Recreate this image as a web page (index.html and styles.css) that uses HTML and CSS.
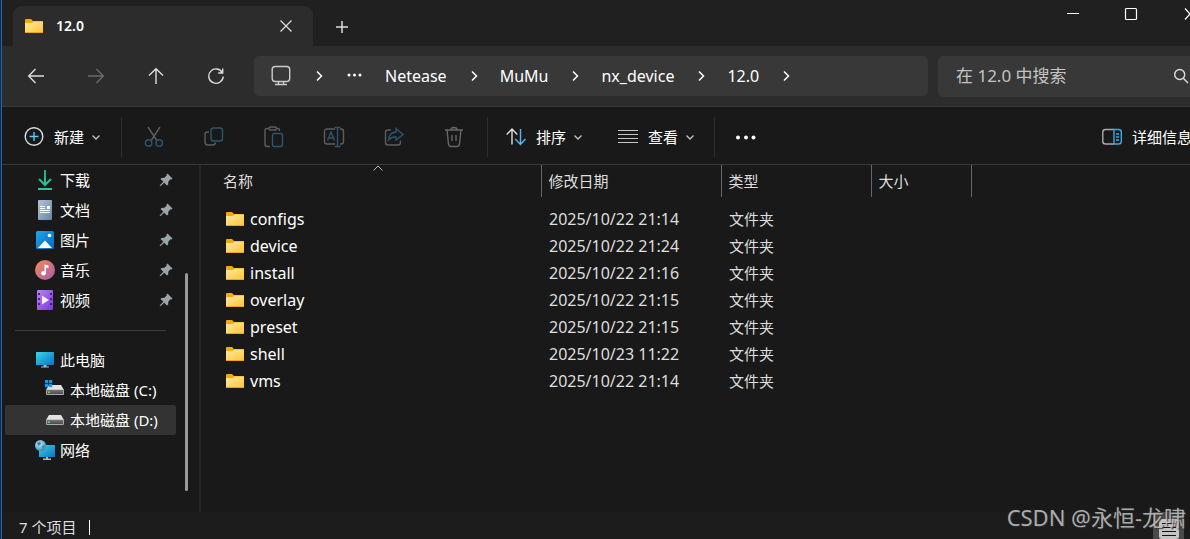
FILE: index.html
```html
<!DOCTYPE html>
<html lang="zh-CN">
<head>
<meta charset="utf-8">
<title>12.0</title>
<link rel="stylesheet" href="styles.css">
</head>
<body>
<svg class="defs" aria-hidden="true">
  <defs>
    <linearGradient id="gold" x1="0" y1="0" x2="1" y2="1"><stop offset="0" stop-color="#ffe9a6"/><stop offset="1" stop-color="#ffc637"/></linearGradient>
    <linearGradient id="doc" x1="0" y1="0" x2="1" y2="1"><stop offset="0" stop-color="#b4c3d6"/><stop offset="1" stop-color="#6585a8"/></linearGradient>
    <linearGradient id="sky" x1="0" y1="0" x2="1" y2="1"><stop offset="0" stop-color="#1fa5ec"/><stop offset="1" stop-color="#0868bd"/></linearGradient>
    <linearGradient id="tune" x1="0" y1="0" x2="1" y2="1"><stop offset="0" stop-color="#f78c4e"/><stop offset="1" stop-color="#a45bb4"/></linearGradient>
    <linearGradient id="film" x1="0" y1="0" x2="1" y2="1"><stop offset="0" stop-color="#b983f5"/><stop offset="1" stop-color="#7838d8"/></linearGradient>
    <linearGradient id="screen" x1="0" y1="0" x2="1" y2="1"><stop offset="0" stop-color="#38d6e6"/><stop offset="1" stop-color="#0b72c4"/></linearGradient>
    <linearGradient id="green" x1="0" y1="0" x2="0" y2="1"><stop offset="0" stop-color="#18b374"/><stop offset="1" stop-color="#27c69d"/></linearGradient>
    <linearGradient id="metal" x1="0" y1="0" x2="0" y2="1"><stop offset="0" stop-color="#777"/><stop offset="1" stop-color="#4a4a4a"/></linearGradient>
    <radialGradient id="globe" cx=".4" cy=".35" r=".7"><stop offset="0" stop-color="#cfe9f5"/><stop offset=".6" stop-color="#6db0d2"/><stop offset="1" stop-color="#3c83b0"/></radialGradient>
  </defs>
  <symbol id="i-folder" viewBox="0 0 20 16"><path d="M1 2Q1 1 2 1H7L9 3H18.500Q19 3 19 4V8H1Z" fill="#f5a90e"/><path d="M1 5H8L9.500 3.500H19V14H1Z" fill="url(#gold)"/><path d="M1 14H19V15H1Z" fill="#eda616"/></symbol>
  <symbol id="i-chev" viewBox="0 0 16 16"><path d="M6 3.500L10.500 8L6 12.500" fill="none" stroke="currentColor" stroke-width="1.500"/></symbol>
  <symbol id="i-down" viewBox="0 0 12 12"><path d="M2.500 4.500L6 8L9.500 4.500" fill="none" stroke="#c4c4c4" stroke-width="1.300"/></symbol>
  <symbol id="i-pin" viewBox="0 0 14 14"><path d="M8.500 .5L13.500 5.500L12.500 6.500L11.500 6.300L9.300 8.700L9.200 11.500L8 12.500L5.200 9.700L1.300 13.300L.6 12.600L4.300 8.800L1.500 6L2.600 4.900L5.400 4.800L7.700 2.600L7.500 1.500Z" fill="#9aa4ab"/></symbol>
  <symbol id="i-drive" viewBox="0 0 20 16"><path d="M4 4H16L19 9H1Z" fill="#e3e3e3"/><rect x="1" y="8.500" width="18" height="5.500" rx="1" fill="#aaa"/><rect x="2" y="9" width="16" height="4" fill="url(#metal)"/><rect x="3" y="10.500" width="2" height="1.500" fill="#4be36a"/></symbol>
</svg>

<div class="window">
  <header class="tabs">
    <div class="tab">
      <svg class="folder"><use href="#i-folder"/></svg>
      <span class="tab-title">12.0</span>
      <button class="plain" aria-label="关闭标签页"><svg width="14" height="14" viewBox="0 0 14 14"><path d="M1.500 1.500L12.500 12.500M12.500 1.500L1.500 12.500" stroke="#ddd" stroke-width="1.200"/></svg></button>
    </div>
    <button class="plain new-tab" aria-label="新标签页"><svg width="14" height="14" viewBox="0 0 14 14"><path d="M7 1V13M1 7H13" stroke="#ddd" stroke-width="1.500"/></svg></button>
    <div class="caption">
      <button class="plain" aria-label="最小化"><svg width="14" height="14" viewBox="0 0 14 14"><path d="M1 6.500H13" stroke="#fff"/></svg></button>
      <button class="plain" aria-label="最大化"><svg width="14" height="14" viewBox="0 0 14 14"><rect x="1.500" y="1.500" width="11" height="11" rx="1" fill="none" stroke="#fff" stroke-width="1.200"/></svg></button>
      <button class="plain" aria-label="关闭"><svg width="14" height="14" viewBox="0 0 14 14"><path d="M3 1.500L8 7L3 12.500M13 1.500L8 7L13 12.500" fill="none" stroke="#fff" stroke-width="1.200"/></svg></button>
    </div>
  </header>

  <div class="navbar">
    <button class="plain nav-btn" aria-label="后退"><svg width="18" height="18" viewBox="0 0 18 18"><path d="M17 9H2M8.500 2L1.700 9L8.500 16"/></svg></button>
    <button class="plain nav-btn dim" aria-label="前进"><svg width="18" height="18" viewBox="0 0 18 18"><path d="M1 9H16M9.500 2L16.300 9L9.500 16"/></svg></button>
    <button class="plain nav-btn" aria-label="向上"><svg width="18" height="18" viewBox="0 0 18 18"><path d="M9 17V2M2 8.500L9 1.700L16 8.500"/></svg></button>
    <button class="plain nav-btn" aria-label="刷新"><svg width="18" height="18" viewBox="0 0 18 18"><path d="M15.500 6A7.200 7.200 0 1 0 16.200 9.500M15.700 1.500V6H11.200"/></svg></button>
    <nav class="address" aria-label="地址">
      <button class="plain" aria-label="此电脑"><svg width="24" height="24" viewBox="0 0 24 24" fill="none" stroke="#ccc" stroke-width="1.400"><rect x="3.200" y="2.500" width="17.500" height="15" rx="3"/><path d="M9.500 17.500V20M14.500 17.500V20M6 20.500H18"/></svg></button>
      <svg class="chev"><use href="#i-chev"/></svg>
      <button class="plain" aria-label="更多"><svg width="22" height="16" viewBox="0 0 22 16" fill="#fff"><circle cx="4" cy="7" r="1.500"/><circle cx="9.500" cy="7" r="1.500"/><circle cx="15" cy="7" r="1.500"/></svg></button>
      <a href="#">Netease</a><svg class="chev"><use href="#i-chev"/></svg>
      <a href="#">MuMu</a><svg class="chev"><use href="#i-chev"/></svg>
      <a href="#">nx_device</a><svg class="chev"><use href="#i-chev"/></svg>
      <a href="#">12.0</a><svg class="chev"><use href="#i-chev"/></svg>
    </nav>
    <div class="search">
      <input type="text" placeholder="在 12.0 中搜索" aria-label="搜索">
      <svg width="16" height="16" viewBox="0 0 16 16" fill="none" stroke="#ddd" stroke-width="1.400"><circle cx="6.700" cy="6.500" r="5"/><path d="M10.300 10.200L15 15"/></svg>
    </div>
  </div>

  <div class="toolbar">
    <button class="plain tool first"><svg width="20" height="20" viewBox="0 0 20 20" fill="none"><circle cx="10" cy="9.500" r="8.800" stroke="#ddd" stroke-width="1.400"/><path d="M10 5V14M5.500 9.500H14.500" stroke="#5cc8ff" stroke-width="1.400"/></svg><span>新建</span><svg class="down"><use href="#i-down"/></svg></button>
    <div class="icons">
      <button class="plain" disabled aria-label="剪切"><svg width="22" height="22" viewBox="0 0 22 22"><path d="M5 1L13.800 14.500M17 1L8.200 14.500" stroke="#5d5d5d"/><circle cx="5.600" cy="17" r="3.200" stroke="#2c566d"/><circle cx="16.200" cy="17" r="3.200" stroke="#2c566d"/></svg></button>
      <button class="plain" disabled aria-label="复制"><svg width="22" height="22" viewBox="0 0 22 22"><path d="M6 6H4.500Q2 6 2 8.500V16Q2 19 5 19H10Q12 19 12.500 16.500" stroke="#5d5d5d"/><rect x="8" y="2" width="11.500" height="13" rx="2.500" stroke="#2c566d"/></svg></button>
      <button class="plain" disabled aria-label="粘贴"><svg width="22" height="22" viewBox="0 0 22 22"><path d="M6 2.500H4Q2 2.500 2 4.500V18Q2 20.500 4 20.500H7M13 2.500H15Q16.500 2.500 16.500 5" stroke="#5d5d5d"/><rect x="6" y="1" width="7.500" height="3" rx="1.500" stroke="#5d5d5d"/><rect x="9.500" y="7.500" width="10" height="13" rx="2" stroke="#2c566d"/></svg></button>
      <button class="plain" disabled aria-label="重命名"><svg width="22" height="22" viewBox="0 0 22 22"><path d="M12 3H4Q1.500 3 1.500 5.500V15.500Q1.500 18 4 18H12M17 3H18Q20.500 3 20.500 5.500V15.500Q20.500 18 18 18H17" stroke="#5d5d5d"/><path d="M4.500 14.500L8 6L11.500 14.500M5.500 12H10.500M14.500 1.500V20.500M11.500 1.500H17.500M11.500 20.500H17.500" stroke="#2c566d"/></svg></button>
      <button class="plain" disabled aria-label="共享"><svg width="22" height="22" viewBox="0 0 22 22"><path d="M8 4H5Q2.500 4 2.500 6.500V16.500Q2.500 19 5 19H15Q17.500 19 17.500 16V14.500" stroke="#5d5d5d"/><path d="M13 2.500L20 8.500L13 14V11Q8.500 10.500 5.500 14Q6 6.500 13 6Z" stroke="#2c566d"/></svg></button>
      <button class="plain" disabled aria-label="删除"><svg width="22" height="22" viewBox="0 0 22 22" stroke="#666"><path d="M2 4H20M4 4L5.500 18Q6 20.500 8 20.500H14Q16 20.500 16.500 18L18 4M8 4Q8 1.500 11 1.500Q14 1.500 14 4M9 9V15M13 9V15"/></svg></button>
    </div>
    <button class="plain tool sort"><svg width="20" height="20" viewBox="0 0 20 20" fill="none" stroke-width="1.400"><path d="M6 17.500V2.500M.7 7.500L6 2L11.300 7.500" stroke="#ddd"/><path d="M14.500 2V17M9.200 12L14.500 17.500L19.500 12" stroke="#4cb9f5"/></svg><span>排序</span><svg class="down"><use href="#i-down"/></svg></button>
    <button class="plain tool view"><svg width="20" height="20" viewBox="0 0 20 20" stroke="#c8c8c8"><path d="M0 3.500H20M0 7.500H20M0 11.500H20M0 15.500H20"/></svg><span>查看</span><svg class="down"><use href="#i-down"/></svg></button>
    <button class="plain tool more" aria-label="查看更多"><svg width="20" height="20" viewBox="0 0 20 20" fill="#fff"><circle cx="2" cy="10.500" r="2"/><circle cx="10" cy="10.500" r="2"/><circle cx="17.500" cy="10.500" r="2"/></svg></button>
    <button class="plain tool details"><svg width="20" height="20" viewBox="0 0 20 20" fill="none"><path d="M12 2.500H3.500Q.8 2.500 .8 5V14.500Q.8 17 3.500 17H12" stroke="#aaa" stroke-width="1.400"/><path d="M12 2.500H16.500Q19.300 2.500 19.300 5V14.500Q19.300 17 16.500 17H12ZM14 7H17M14 10H17M14 13H17" stroke="#3fa9e0" stroke-width="1.400"/></svg><span>详细信息</span></button>
  </div>

  <main class="content">
    <aside class="side">
      <ul class="tree">
        <li><svg class="ico" viewBox="0 0 20 20" fill="none" stroke="url(#green)" stroke-width="2"><path d="M10.010 0L10 15M4 9L10 15L16 9"/><path d="M3 19H17" stroke="#27c69d"/></svg><span>下载</span><svg class="pin"><use href="#i-pin"/></svg></li>
        <li><svg class="ico" viewBox="0 0 20 20"><rect x="3" width="14" height="20" rx="1" fill="url(#doc)"/><path d="M5 6.500H10M5 8.500H10M5 10.500H15M5 12.500H15" stroke="#fff"/><rect x="12" y="6" width="3" height="3" fill="#fff"/></svg><span>文档</span><svg class="pin"><use href="#i-pin"/></svg></li>
        <li><svg class="ico" viewBox="0 0 20 20"><rect x="1" y="1" width="18" height="18" rx="1.500" fill="url(#sky)"/><path d="M3 18L10 10.500L17 18Z" fill="#fff"/><circle cx="14.500" cy="5.500" r="1.800" fill="#fff"/></svg><span>图片</span><svg class="pin"><use href="#i-pin"/></svg></li>
        <li><svg class="ico" viewBox="0 0 20 20"><circle cx="10" cy="10" r="10" fill="url(#tune)"/><circle cx="8.500" cy="13.300" r="2.300" fill="#fff"/><path d="M9.500 13V4.500L13.500 5.500V8L11 7.500V13Z" fill="#fff"/></svg><span>音乐</span><svg class="pin"><use href="#i-pin"/></svg></li>
        <li><svg class="ico" viewBox="0 0 20 20"><rect x="2" width="16" height="20" rx="1" fill="url(#film)"/><path d="M4 3V18M16 3V18" stroke="#451c83" stroke-width="2" stroke-dasharray="2 3"/><path d="M7 5.500L14 10L7 14.500Z" fill="#f5eeff"/></svg><span>视频</span><svg class="pin"><use href="#i-pin"/></svg></li>
      </ul>
      <hr>
      <ul class="tree">
        <li><svg class="ico" viewBox="0 0 20 20"><rect x="1" y="2" width="18" height="13" rx=".5" fill="url(#screen)"/><path d="M8.500 15H11.500V16.500H14V17.500H6V16.500H8.500Z" fill="#aeb8c0"/></svg><span>此电脑</span></li>
        <li class="sub"><svg class="ico" viewBox="0 0 20 20"><use href="#i-drive" y="1" width="20" height="16"/><path d="M0 0H3.200V3.200H0ZM4 0H7.200V3.200H4ZM0 4H3.200V7.200H0ZM4 4H7.200V7.200H4Z" fill="#1597ee"/></svg><span>本地磁盘 (C:)</span></li>
        <li class="sub current"><svg class="ico" viewBox="0 0 20 20"><use href="#i-drive" y="1" width="20" height="16"/></svg><span>本地磁盘 (D:)</span></li>
        <li><svg class="ico" viewBox="0 0 20 20"><rect x="4" y="5" width="16" height="12" rx=".5" fill="url(#screen)"/><path d="M11 17H13V18.500H16V20H8V18.500H11Z" fill="#aeb8c0"/><circle cx="5.500" cy="5.500" r="5.500" fill="url(#globe)"/><path d="M2 3L5 1.500L6 4L3.500 6ZM7 6L10 5.500L8 9Z" fill="#3b83a8"/></svg><span>网络</span></li>
      </ul>
      <div class="thumb"></div>
    </aside>

    <section class="list">
      <svg class="caret" width="10" height="6" viewBox="0 0 10 6"><path d="M.5 5.500L5 1L9.500 5.500" fill="none" stroke="#bbb"/></svg>
      <table>
        <thead><tr><th class="c-name">名称</th><th class="c-date">修改日期</th><th class="c-type">类型</th><th class="c-size">大小</th></tr></thead>
        <tbody>
          <tr><td><svg class="folder"><use href="#i-folder"/></svg>configs</td><td>2025/10/22 21:14</td><td>文件夹</td><td></td></tr>
          <tr><td><svg class="folder"><use href="#i-folder"/></svg>device</td><td>2025/10/22 21:24</td><td>文件夹</td><td></td></tr>
          <tr><td><svg class="folder"><use href="#i-folder"/></svg>install</td><td>2025/10/22 21:16</td><td>文件夹</td><td></td></tr>
          <tr><td><svg class="folder"><use href="#i-folder"/></svg>overlay</td><td>2025/10/22 21:15</td><td>文件夹</td><td></td></tr>
          <tr><td><svg class="folder"><use href="#i-folder"/></svg>preset</td><td>2025/10/22 21:15</td><td>文件夹</td><td></td></tr>
          <tr><td><svg class="folder"><use href="#i-folder"/></svg>shell</td><td>2025/10/23 11:22</td><td>文件夹</td><td></td></tr>
          <tr><td><svg class="folder"><use href="#i-folder"/></svg>vms</td><td>2025/10/22 21:14</td><td>文件夹</td><td></td></tr>
        </tbody>
      </table>
    </section>
  </main>

  <footer class="status">
    <span class="count">7 个项目</span>
    <button class="plain layout" aria-label="详细信息视图"><svg width="20" height="20" viewBox="0 0 20 20"><rect width="20" height="20" rx="3" fill="#c4c4c4"/><path d="M3 4.500H17M3 8.500H17M3 12.500H17M3 16.500H17" stroke="#111"/></svg></button>
  </footer>
</div>
<div class="mark">CSDN @永恒-龙啸</div>
</body>
</html>
```
FILE: styles.css
```css
* { box-sizing: border-box; }

html, body { height: 100%; }

body {
  margin: 0;
  padding-left: 1px;
  overflow: hidden;
  position: relative;
  background: #1c2733;
  color: #fff;
  font: 15px/20px "Noto Sans", "Noto Sans CJK SC", sans-serif;
}

.defs { position: absolute; width: 0; height: 0; }
svg { flex: none; display: block; }

.window {
  height: 100%;
  display: flex;
  flex-direction: column;
  border-left: 1px solid #0f6cb8;
  background: #191919;
}

.plain {
  display: flex;
  align-items: center;
  justify-content: center;
  padding: 0;
  border: 0;
  background: none;
  color: inherit;
  font: inherit;
  white-space: nowrap;
}

.folder { width: 20px; height: 16px; }

/* Tab strip */
.tabs {
  flex: none;
  height: 46px;
  display: flex;
  align-items: flex-start;
  padding-left: 11px;
  background: #202020;
}
.tab {
  width: 300px;
  height: 40px;
  margin-top: 6px;
  padding: 0 20px 0 11px;
  display: flex;
  align-items: center;
  gap: 12px;
  border-radius: 9px 9px 0 0;
  background: #2c2c2c;
}
.tab-title { flex: 1; font-weight: 600; font-size: 14px; }
.new-tab { width: 32px; height: 40px; margin: 7px 0 0 13px; }
.caption { display: flex; margin: 0 -28px 0 auto; }
.caption .plain { width: 58px; height: 28px; }

/* Navigation row */
.navbar {
  flex: none;
  height: 61px;
  display: flex;
  align-items: center;
  padding-left: 4px;
  border-bottom: 1px solid #3a3a3a;
  background: #2c2c2c;
}
.nav-btn { width: 60px; height: 40px; }
.nav-btn svg { fill: none; stroke: #ddd; stroke-width: 1.4; }
.nav-btn.dim svg { stroke: #6b6b6b; }
.address {
  flex: 1;
  min-width: 0;
  height: 40px;
  margin-left: 8px;
  padding: 0 15px;
  display: flex;
  align-items: center;
  gap: 18px;
  border-radius: 5px;
  background: #383838;
  font-size: 16px;
}
.address a { padding-right: 1px; color: #fff; text-decoration: none; }
.chev { width: 16px; height: 16px; }
.search {
  flex: none;
  width: 262px;
  height: 41px;
  margin: 0 -10px 0 10px;
  padding: 0 11px 0 18px;
  display: flex;
  align-items: center;
  border-radius: 5px;
  background: #383838;
}
.search input {
  flex: 1;
  min-width: 0;
  padding: 0;
  border: 0;
  outline: 0;
  background: none;
  color: #ccc;
  font: 17px/24px "Noto Sans", "Noto Sans CJK SC", sans-serif;
}
.search input::placeholder { color: #c4c4c4; opacity: 1; }

/* Command bar */
.toolbar {
  flex: none;
  height: 58px;
  display: flex;
  align-items: center;
  padding-top: 2px;
  border-bottom: 1px solid #3a3a3a;
}
.tool { height: 40px; }
.tool span { margin: 0 6px 0 10px; }
.down { width: 12px; height: 12px; }
.first { padding: 0 19px 0 22px; }
.icons {
  display: flex;
  padding: 0 3px 0 2px;
  border: solid #2d2d2d;
  border-width: 0 1px;
}
.icons .plain { width: 60px; height: 40px; }
.icons svg { fill: none; stroke-width: 1.4; }
.sort { padding: 0 17px 0 18px; }
.view { padding: 0 18px 0 17px; border-right: 1px solid #2d2d2d; }
.more { padding-left: 21px; }
.details { margin: 0 -8px 0 auto; }

/* Main area */
.content { flex: 1; min-height: 0; display: flex; }
.side {
  flex: none;
  width: 199px;
  position: relative;
  padding-left: 3px;
  border-right: 2px solid #262626;
}
.tree { margin: 0; padding: 0; list-style: none; }
.tree li {
  width: 171px;
  height: 30px;
  padding: 0 3px 0 30px;
  display: flex;
  align-items: center;
  gap: 5px;
  border-radius: 2px;
  white-space: nowrap;
}
.tree .sub { padding-left: 40px; }
.tree .current { background: #333; }
.ico { width: 20px; height: 20px; }
.pin { width: 14px; height: 14px; margin-left: auto; }
.side hr {
  width: 151px;
  margin: 15px 0 14px 10px;
  border: 0;
  border-top: 1px solid #3c3c3c;
}
.thumb {
  position: absolute;
  top: 31%;
  bottom: 6%;
  right: 11px;
  width: 3px;
  border-radius: 2px;
  background: #9a9a9a;
}

.list { flex: 1; position: relative; }
.caret { position: absolute; left: 172px; top: 0; }
.list table { table-layout: fixed; width: 770px; border-collapse: collapse; }
.list th {
  height: 32px;
  padding: 0 0 0 7px;
  border-right: 1px solid #666;
  color: #dedede;
  font-weight: 400;
  text-align: left;
}
.list .c-name { width: 340px; padding-left: 22px; }
.c-date { width: 180px; }
.c-type { width: 150px; }
.c-size { width: 100px; }
.list tbody::before { content: ""; display: block; height: 8px; }
.list td { height: 27px; padding: 0 0 0 8px; color: #dedede; }
.list td:nth-child(1) {
  display: flex;
  align-items: center;
  gap: 5px;
  padding-left: 24px;
  color: #fff;
  font-size: 16px;
}
.list td:nth-child(2) { font-size: 16px; }

/* Status bar */
.status {
  flex: none;
  height: 27px;
  padding: 0 6px 0 17px;
  display: flex;
  align-items: center;
  justify-content: space-between;
  background: #1c1c1c;
}
.count {
  margin-top: 3px;
  padding-right: 13px;
  border-right: 1px solid #fff;
  color: #dedede;
  line-height: 15px;
}
.layout { width: 31px; height: 27px; padding-top: 7px; background: #4a4a4a; }
.mark {
  position: absolute;
  right: 4px;
  bottom: 6px;
  color: #bbb;
  font: 22px/32px "Noto Sans", "Noto Sans CJK SC", sans-serif;
  opacity: 0.9;
  text-shadow: 1px 1px 1px #333;
}
```
